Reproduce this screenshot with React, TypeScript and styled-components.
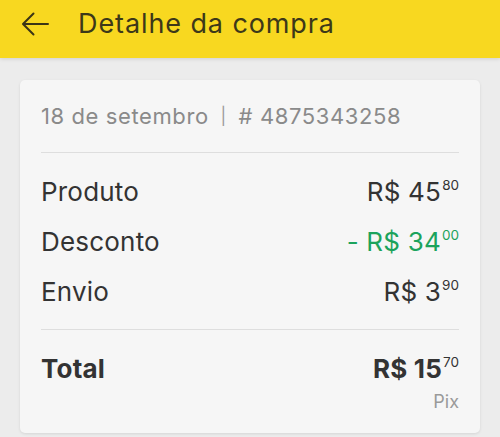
import React from "react";
import styled, { createGlobalStyle } from "styled-components";

const GlobalStyle = createGlobalStyle`
  html, body {
    margin: 0;
    padding: 0;
    background: #ececec;
  }
  body {
    font-family: "Inter", "Open Sans", sans-serif;
    color: #333;
  }
`;

interface Price {
  whole: string;
  cents: string;
}

interface Line {
  label: string;
  price: Price;
  negative?: boolean;
}

const lines: Line[] = [
  { label: "Produto", price: { whole: "45", cents: "80" } },
  { label: "Desconto", price: { whole: "34", cents: "00" }, negative: true },
  { label: "Envio", price: { whole: "3", cents: "90" } },
];

const Money: React.FC<{ price: Price; negative?: boolean }> = ({ price, negative }) => (
  <Amount $green={negative}>
    {negative ? "- " : ""}R$ {price.whole}
    <Cents>{price.cents}</Cents>
  </Amount>
);

const App: React.FC = () => {
  return (
    <>
      <GlobalStyle />
      <Page>
        <Header>
          <BackButton aria-label="Voltar">
            <svg width="28" height="24" viewBox="0 0 28 24" fill="none">
              <path
                d="M27 12H2.5M12.5 1.5L2 12l10.5 10.5"
                stroke="#3b3516"
                strokeWidth="2"
                strokeLinecap="round"
                strokeLinejoin="round"
              />
            </svg>
          </BackButton>
          <Title>Detalhe da compra</Title>
        </Header>

        <Card>
          <Meta>
            18 de setembro <Sep>|</Sep> # 4875343258
          </Meta>
          <Divider />
          <Lines>
            {lines.map((line) => (
              <Row key={line.label}>
                <Label>{line.label}</Label>
                <Money price={line.price} negative={line.negative} />
              </Row>
            ))}
          </Lines>
          <Divider />
          <TotalRow>
            <TotalLabel>Total</TotalLabel>
            <TotalAmount>
              R$ 15<Cents>70</Cents>
            </TotalAmount>
          </TotalRow>
          <Method>Pix</Method>
        </Card>
      </Page>
    </>
  );
};

export default App;

const Page = styled.div`
  width: 500px;
  height: 437px;
  overflow: hidden;
  background: #ececec;
`;

const Header = styled.header`
  height: 58px;
  background: #f8d820;
  display: flex;
  align-items: flex-start;
  padding: 0 0 0 21px;
  box-shadow: 0 1px 4px rgba(0, 0, 0, 0.12);
  position: relative;
  z-index: 1;
`;

const BackButton = styled.button`
  border: 0;
  background: none;
  padding: 0;
  margin: 12px 0 0 0;
  width: 28px;
  height: 24px;
  display: flex;
`;

const Title = styled.h1`
  margin: 0 0 0 29px;
  font-size: 27px;
  line-height: 47px;
  font-weight: 400;
  letter-spacing: 0.9px;
  color: #3d3819;
`;

const Card = styled.section`
  margin: 22px 20px 0;
  background: #f6f6f6;
  border-radius: 5px;
  box-shadow: 0 1px 3px rgba(0, 0, 0, 0.1);
  padding: 21px 21px 0;
  height: 353px;
  box-sizing: border-box;
`;

const Meta = styled.div`
  font-size: 22px;
  line-height: 30px;
  letter-spacing: 0.6px;
  color: #8a8a8a;
  margin-bottom: 21px;
`;

const Sep = styled.span`
  margin: 0 5px;
  font-size: 17px;
  vertical-align: 2px;
  color: #9a9a9a;
`;

const Divider = styled.hr`
  border: 0;
  border-top: 1.5px solid #dedede;
  margin: 0;
`;

const Lines = styled.div`
  display: flex;
  flex-direction: column;
  padding: 14px 0 12px;
`;

const Row = styled.div`
  display: flex;
  justify-content: space-between;
  align-items: baseline;
  line-height: 50px;
`;

const Label = styled.span`
  font-size: 26px;
  letter-spacing: 0.2px;
  color: #333;
`;

const Amount = styled.span<{ $green?: boolean }>`
  font-size: 26px;
  letter-spacing: 0.2px;
  color: ${(p) => (p.$green ? "#1ca35c" : "#333")};
`;

const Cents = styled.sup`
  font-size: 13.5px;
  font-weight: 400;
  vertical-align: 11px;
  line-height: 0;
  margin-left: 1px;
  letter-spacing: 0;
`;

const TotalRow = styled(Row)`
  margin-top: 14px;
`;

const TotalLabel = styled(Label)`
  font-weight: 700;
`;

const TotalAmount = styled(Amount)`
  font-weight: 700;
`;

const Method = styled.div`
  text-align: right;
  font-size: 18px;
  line-height: 20px;
  color: #9a9a9a;
  margin-top: -2px;
`;
